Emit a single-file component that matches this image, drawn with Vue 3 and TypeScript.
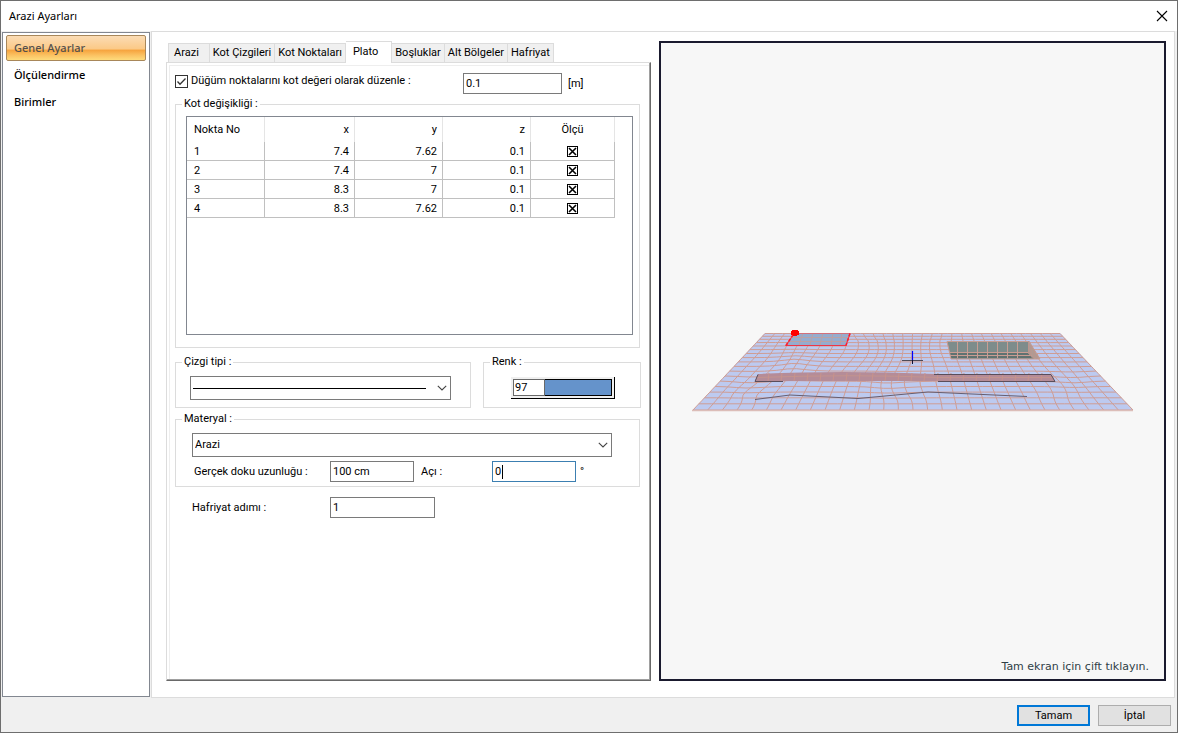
<script setup lang="ts">
import { ref } from 'vue'

interface Point { no: number; x: string; y: string; z: string; measured: boolean }

const sections = ['Genel Ayarlar', 'Ölçülendirme', 'Birimler']
const activeSection = ref('Genel Ayarlar')

const tabs = ['Arazi', 'Kot Çizgileri', 'Kot Noktaları', 'Plato', 'Boşluklar', 'Alt Bölgeler', 'Hafriyat']
const activeTab = ref('Plato')

const editNodes = ref(true)
const level = ref('0.1')
const colorNo = ref('97')
const textureLength = ref('100 cm')
const angle = ref('0')
const excavationStep = ref('1')

const points = ref<Point[]>([
  { no: 1, x: '7.4', y: '7.62', z: '0.1', measured: true },
  { no: 2, x: '7.4', y: '7', z: '0.1', measured: true },
  { no: 3, x: '8.3', y: '7', z: '0.1', measured: true },
  { no: 4, x: '8.3', y: '7.62', z: '0.1', measured: true },
])

// Terrain mesh: a grid in perspective, bent around the hill and the pit.
const COLS = 30
const ROWS = 17

function bump(x: number, y: number, cx: number, cy: number, rx: number, ry: number): number {
  return Math.exp(-(((x - cx) / rx) ** 2) - ((y - cy) / ry) ** 2)
}

function project(u: number, v: number): [number, number] {
  const depth = 0.6 * v + 0.4 * v * v
  const y = 333.5 + 76.5 * depth
  const left = 765 - 72 * depth
  const right = 1060 + 73 * depth
  const x = left + (right - left) * u
  const edge = Math.min(1, 8 * u * (1 - u)) * Math.min(1, 8 * v * (1 - v))
  const dx = 7 * bump(x, y, 772, 362, 24, 16) - 8 * bump(x, y, 750, 392, 22, 12)
    + 11 * bump(x, y, 855, 352, 34, 18) - 9 * bump(x, y, 905, 382, 30, 16)
    + 7 * bump(x, y, 1060, 384, 25, 14) - 5 * bump(x, y, 940, 350, 22, 16)
  const dy = -3 * bump(x, y, 790, 366, 20, 12) + 3 * bump(x, y, 745, 382, 22, 10)
    + 2 * bump(x, y, 895, 384, 24, 10) + 3 * bump(x, y, 1078, 378, 24, 10)
  return [x + dx * edge, y + dy * edge]
}

function line(at: (t: number) => [number, number]): string {
  const out: string[] = []
  for (let i = 0; i <= 34; i++) {
    const [x, y] = at(i / 34)
    out.push(`${x.toFixed(1)},${y.toFixed(1)}`)
  }
  return out.join(' ')
}

const mesh: string[] = []
for (let c = 0; c <= COLS; c++) mesh.push(line(t => project(c / COLS, t)))
for (let r = 0; r <= ROWS; r++) mesh.push(line(t => project(t, r / ROWS)))

const bandLines = Array.from({ length: 22 }, (_, i) => 768 + i * 13)
const pitLines = Array.from({ length: 7 }, (_, i) => 957.5 + i * 10)
</script>

<template>
  <div class="window">
    <header class="titlebar">
      <h1>Arazi Ayarları</h1>
      <button class="close" type="button" aria-label="Kapat">
        <svg width="12" height="12" viewBox="0 0 12 12"><path d="M1 1 11 11M11 1 1 11" stroke="#000" stroke-width="1.1" fill="none" /></svg>
      </button>
    </header>

    <div class="body">
      <nav class="sidebar">
        <button
          v-for="s in sections" :key="s" type="button"
          :class="{ active: s === activeSection }" @click="activeSection = s"
        >{{ s }}</button>
      </nav>

      <main class="content">
        <section class="settings">
          <div class="tabs" role="tablist">
            <button
              v-for="t in tabs" :key="t" type="button" role="tab"
              :aria-selected="t === activeTab" :class="{ active: t === activeTab }" @click="activeTab = t"
            >{{ t }}</button>
          </div>

          <div class="page">
            <div class="row level">
              <label class="check">
                <span class="tick">
                  <input v-model="editNodes" type="checkbox">
                  <svg v-if="editNodes" width="13" height="13" viewBox="0 0 13 13"><path d="M2.5 6.5 5 9.2 10.5 3.5" stroke="#333" stroke-width="1.3" fill="none" /></svg>
                </span>
                Düğüm noktalarını kot değeri olarak düzenle :
              </label>
              <input v-model="level" class="field w-level" type="text" aria-label="Kot değeri">
              <span class="unit">[m]</span>
            </div>

            <fieldset class="heights">
              <legend>Kot değişikliği :</legend>
              <div class="list">
                <table>
                  <thead>
                    <tr><th class="c-no">Nokta No</th><th class="c-x">x</th><th class="c-y">y</th><th class="c-y">z</th><th class="c-m">Ölçü</th></tr>
                  </thead>
                  <tbody>
                    <tr v-for="p in points" :key="p.no">
                      <td>{{ p.no }}</td><td>{{ p.x }}</td><td>{{ p.y }}</td><td>{{ p.z }}</td>
                      <td>
                        <span class="cross">
                          <input v-model="p.measured" type="checkbox" :aria-label="'Ölçü ' + p.no">
                          <svg v-if="p.measured" width="11" height="11" viewBox="0 0 11 11"><path d="M2 2 9 9M9 2 2 9" stroke="#000" stroke-width="1.6" fill="none" /></svg>
                        </span>
                      </td>
                    </tr>
                  </tbody>
                </table>
              </div>
            </fieldset>

            <div class="pair">
              <fieldset class="linetype">
                <legend>Çizgi tipi :</legend>
                <div class="combo">
                  <select aria-label="Çizgi tipi"><option></option></select>
                  <span class="sample"></span>
                  <svg class="arrow" width="10" height="6" viewBox="0 0 10 6"><path d="M.8.8 5 5 9.2.8" stroke="#444" stroke-width="1.1" fill="none" /></svg>
                </div>
              </fieldset>
              <fieldset class="color">
                <legend>Renk :</legend>
                <div class="swatch">
                  <input v-model="colorNo" type="text" aria-label="Renk">
                  <button type="button" aria-label="Renk"></button>
                </div>
              </fieldset>
            </div>

            <fieldset class="material">
              <legend>Materyal :</legend>
              <div class="combo">
                <select aria-label="Materyal"><option>Arazi</option></select>
                <svg class="arrow" width="10" height="6" viewBox="0 0 10 6"><path d="M.8.8 5 5 9.2.8" stroke="#444" stroke-width="1.1" fill="none" /></svg>
              </div>
              <div class="row texture">
                <label class="lead" for="texture">Gerçek doku uzunluğu :</label>
                <input id="texture" v-model="textureLength" class="field w-small" type="text">
                <label class="second" for="angle">Açı :</label>
                <span class="field w-small focus"><input id="angle" v-model="angle" type="text" size="1"><i class="caret"></i></span>
                <span class="degree">°</span>
              </div>
            </fieldset>

            <div class="row step">
              <label for="step">Hafriyat adımı :</label>
              <input id="step" v-model="excavationStep" class="field w-step" type="text">
            </div>
          </div>
        </section>

        <section class="preview">
          <svg class="scene" viewBox="661 43 503 636" aria-hidden="true">
            <polygon points="765,333 1060,333 1133,410 693,410" fill="#bdcaf0" />
            <g fill="none" stroke="#cf9d94" stroke-width="1">
              <polyline v-for="(m, i) in mesh" :key="i" :points="m" />
            </g>
            <path d="M692 410.5H1133" stroke="#dcbdb8" stroke-width="1.5" />

            <path d="M794 333.5H850L846 345.5H786Z" fill="#94accf" />
            <path d="M791 337.5h58M790 341.5h57M803 333l-4 12M813 333l-3 12M823 333l-3 12M833 333l-2 12M842 333l-2 12" stroke="#bba0a4" />
            <path d="M794 333.5H850" stroke="#d1707c" />
            <path d="M850 333.5 846 345.5H786L794 333.5" fill="none" stroke="#f03546" stroke-width="1.1" />
            <path d="M850 333.5 846 345.5M786 345.5 794 333.5" stroke="#ff1c2c" stroke-width="1.5" stroke-dasharray="3 2" />
            <path d="M792 330h6v1h1v4h-2v1h-4v-1h-2v-4h1z" fill="#f00" />

            <path d="M758 374Q840 370 935 374H1051L1055 381H755Z" fill="#b58c98" />
            <path d="M757 377.5Q850 374 940 377.5H1053" fill="none" stroke="#c3948f" />
            <path v-for="x in bandLines" :key="x" :d="`M${x + 1} 373 ${x} 381`" stroke="#c8938c" />
            <path d="M758 374.5 755 381.5H783M934 374.5H1051L1055 381.5H938" fill="none" stroke="#5a4e5c" />

            <path d="M947 341H1029L1040 359H951Z" fill="#7e8c8b" />
            <path d="M950 353H1029L1034 358H951Z" fill="#5f7271" />
            <path d="M1029 341 1040 359H1034L1028 353Z" fill="#b09b94" />
            <path d="M947 341.5H1029L1040 359H951ZM950 352.5H1029M950 355.5H1032" fill="none" stroke="#c99d93" />
            <path v-for="x in pitLines" :key="x" :d="`M${x} 341v17`" stroke="#c99d93" />
            <path d="M1028.5 341v12l4 5M1031 345v11M1034 350v8M1037 354v5" fill="none" stroke="#bb958d" />

            <path d="M755 399.5 790 395 858 398.5 928 392 1027 396.5" fill="none" stroke="#665e70" />
            <path d="M902 360.5H923" stroke="#4e4c59" />
            <path d="M912.5 351v9" stroke="#00f" stroke-width="1.2" />
            <path d="M912.5 360v4" stroke="#113" />
          </svg>
          <p class="hint">Tam ekran için çift tıklayın.</p>
        </section>
      </main>
    </div>

    <footer class="footer">
      <button class="ok" type="button">Tamam</button>
      <button type="button">İptal</button>
    </footer>
  </div>
</template>

<style>
html, body { height: 100%; margin: 0; }
#app { height: 100%; }
</style>

<style scoped>
* { box-sizing: border-box; }
.window {
  display: flex; flex-direction: column; min-height: 100vh;
  border: 1px solid #6e6e6e; background: #f0f0f0; color: #000;
  font: 11px/14px Roboto, "Liberation Sans", Arial, sans-serif;
}
button, input, select { font: inherit; color: inherit; margin: 0; border-radius: 0; }
.titlebar { display: flex; align-items: center; justify-content: space-between; height: 30px; padding: 0 8px; background: #fff; }
.titlebar h1 { margin: 0; font: 400 11px/16px "Noto Sans", sans-serif; }
.close { display: flex; padding: 1px; border: 0; background: none; }

.body { display: flex; flex: 1; gap: 1px; padding: 0 2px 0 1px; }
.sidebar {
  display: flex; flex-direction: column; flex: 0 0 148px; margin: 1px 0;
  padding: 2px 3px; border: 1px solid #828790; background: #fff;
}
.sidebar button {
  height: 27px; padding: 0 7px; border: 1px solid transparent; border-radius: 2px; background: none;
  text-align: left; font: 500 11px/16px "Noto Sans", sans-serif;
}
.sidebar button.active {
  height: 26px; border-color: #a8875a; color: #54504c;
  background: linear-gradient(#fbdcb5, #fbc986 55%, #f6a23c 58%, #fbc262 80%, #fedb7c);
}
.content {
  display: flex; flex: 1; gap: 8px; padding: 9px 8px 16px 14px;
  border: 1px solid #dcdcdc; background: #fff;
}
.settings { display: flex; flex-direction: column; flex: 485 1 0; min-width: 485px; }
.tabs { display: flex; align-items: flex-end; padding-left: 2px; }
.tabs button {
  height: 19px; padding: 0 3px; border: 1px solid #dcdcdc; border-width: 1px 1px 0 0;
  background: #f0f0f0; white-space: nowrap;
}
.tabs button:first-child { border-left-width: 1px; padding: 0 10px 0 5px; }
.tabs button.active { z-index: 1; height: 22px; padding: 0 13px 2px 7px; background: #fff; margin-bottom: -1px; }
.page {
  flex: 1; padding: 7px 9px 7px 8px; border: 1px solid; border-color: #dcdcdc #696969 #696969 #dcdcdc;
  box-shadow: inset -1px -1px #a0a0a0, inset 2px 2px #fff, inset 3px 3px #eee;
}
.row { display: flex; align-items: center; }
.field { height: 21px; padding: 0 2px; border: 1px solid #7a7a7a; background: #fff; outline: 0; }
.level { height: 27px; align-items: flex-start; padding-top: 3px; }
.check { display: flex; align-items: center; gap: 3px; flex: 0 0 288px; height: 16px; white-space: nowrap; }
.tick, .cross { display: inline-grid; place-items: center; }
.tick > *, .cross > * { grid-area: 1 / 1; pointer-events: none; }
.tick input, .cross input { appearance: none; width: 13px; height: 13px; border: 1px solid #333; background: #fff; pointer-events: auto; }
.cross input { width: 11px; height: 11px; border: 1px solid #000; }
.w-level { width: 99px; }
.w-small { width: 84px; }
.w-step { width: 105px; }
.unit { padding: 4px 6px; }

fieldset { min-width: 0; margin: 0; border: 1px solid #dcdcdc; }
legend { height: 14px; padding: 0 2px; white-space: nowrap; }
.heights { padding: 5px 6px 12px 10px; margin-right: 1px; }
.heights legend { margin-left: -4px; }
.list { height: 219px; border: 1px solid #828790; }
table { border-collapse: separate; border-spacing: 0; table-layout: fixed; width: 428px; }
th, td { padding: 0 5px 0 7px; text-align: right; font-weight: 400; border-right: 1px solid #c0c0c0; }
th { height: 25px; border-color: #e5e5e5; }
td { height: 19px; padding-top: 2px; border-bottom: 1px solid #c0c0c0; line-height: 16px; }
th:first-child, td:first-child { text-align: left; }
th:last-child, td:last-child { text-align: center; padding: 0; }
.c-no { width: 78px; } .c-x { width: 90px; } .c-y { width: 88px; } .c-m { width: 84px; }
.cross { vertical-align: middle; }

.pair { display: grid; grid-template-columns: 296fr 158fr; gap: 12px; margin-top: 7px; }
.linetype { padding: 7px 19px 7px 14px; }
.linetype legend { margin-left: -8px; }
.color { padding: 8px 25px 8px 27px; }
.color legend { margin-left: -21px; }
.combo { display: grid; align-items: center; }
.combo > * { grid-area: 1 / 1; pointer-events: none; }
.combo select { appearance: none; width: 100%; height: 24px; padding: 0 2px; border: 1px solid #7a7a7a; background: #fff; pointer-events: auto; }
.arrow { justify-self: end; margin-right: 4px; }
.sample { height: 1px; margin: 0 25px 0 3px; background: #000; }
.swatch { display: flex; height: 22px; padding: 2px; border: solid #000; border-width: 0 1px 1px 0; background: #f0f0f0; }
.swatch input { width: 32px; padding: 0 1px; border: 1px solid #696969; background: #fff; }
.swatch button { flex: 1; padding: 0; border: 1px solid #000; border-left: 0; background: #6593cb; }

.material { margin: 4px 1px 0 0; padding: 7px 27px 4px 16px; }
.material legend { margin-left: -10px; }
.texture { margin-top: 4px; }
.lead { width: 138px; padding-left: 2px; white-space: nowrap; }
.second { width: 78px; padding-left: 7px; }
.focus { display: flex; align-items: center; border-color: #3c7fb1; }
.focus input { width: 7px; padding: 0; border: 0; outline: 0; }
.caret { width: 1px; height: 14px; background: #000; }
.degree { padding-left: 4px; }
.step { margin-top: 10px; padding-left: 17px; }
.step label { width: 138px; }

.preview { position: relative; display: flex; flex-direction: column; flex: 507 1 0; border: 2px solid #1a1a2e; background: #f7f7f7; }
.scene { display: block; flex: 1 1 0; width: 100%; min-height: 0; }
.hint { position: absolute; right: 15px; bottom: 4px; margin: 0; color: #2f4046; font: 11px/16px "DejaVu Sans", sans-serif; }

.footer { display: flex; justify-content: flex-end; gap: 8px; padding: 7px 6px 6px; }
.footer button { width: 73px; height: 21px; padding: 0; border: 1px solid #adadad; background: #e1e1e1; }
.footer .ok { border: 2px solid #0078d7; }
</style>
